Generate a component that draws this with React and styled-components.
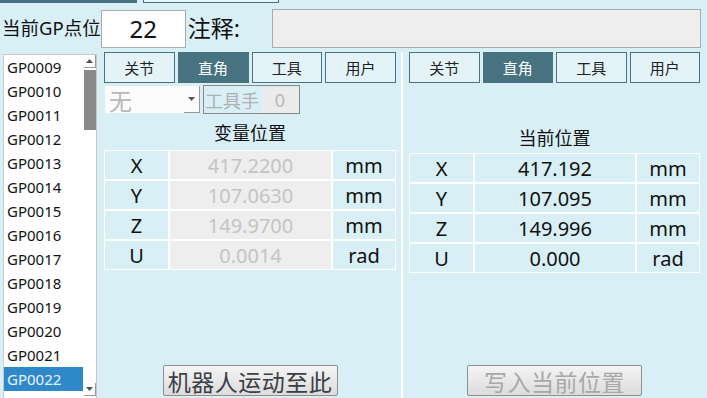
import React from "react";
import styled, { createGlobalStyle } from "styled-components";

const FONT = "'Noto Sans', 'Noto Sans CJK SC', sans-serif";
const BG = "#d9eff6";
const TEAL = "#46737f";

const Global = createGlobalStyle`
  html, body { margin: 0; padding: 0; background: ${BG}; overflow: hidden; }
  body { font-family: ${FONT}; color: #111; }
  * { box-sizing: border-box; }
`;

const Page = styled.div`
  width: 707px;
  height: 398px;
  display: flex;
  flex-direction: column;
  background: ${BG};
  overflow: hidden;
`;

const TopStrip = styled.div`
  height: 3px;
  display: flex;
  gap: 6px;
`;

const TopTab = styled.div`
  width: ${(p) => (p.$active ? "137px" : "136px")};
  height: 3px;
  background: ${(p) => (p.$active ? TEAL : "#e6f4f8")};
  border: ${(p) => (p.$active ? "none" : `1px solid ${TEAL}`)};
  border-top: none;
`;

const Header = styled.div`
  margin-top: 6px;
  height: 39px;
  display: flex;
  align-items: center;
  padding-left: 2px;
`;

const Label = styled.span`
  font-size: ${(p) => p.$size || 18}px;
  line-height: 1;
  white-space: nowrap;
`;

const PointInput = styled.div`
  width: 85px;
  height: 38px;
  background: #fff;
  border: 1px solid #aaa;
  display: flex;
  align-items: center;
  justify-content: center;
  font-size: 24px;
  margin-right: 2px;
`;

const Comment = styled.div`
  margin-left: auto;
  margin-right: 6px;
  width: 429px;
  height: 39px;
  background: #eeeeee;
  border: 1px solid #aaa;
`;

const Main = styled.div`
  margin-top: 4px;
  flex: 1;
  display: flex;
  padding-left: 3px;
`;

const List = styled.div`
  margin-top: 2px;
  width: 94px;
  height: 360px;
  background: #fff;
  border: 1px solid #c8c8c8;
  position: relative;
  margin-right: 7px;
`;

const Item = styled.div`
  height: 24px;
  width: 79px;
  padding-left: 3px;
  display: flex;
  align-items: center;
  font-size: 15px;
  color: ${(p) => (p.$sel ? "#e8f4ff" : "#111")};
  background: ${(p) => (p.$sel ? "#2f89c8" : "transparent")};
`;

const ScrollBar = styled.div`
  position: absolute;
  top: 0;
  right: 0;
  width: 13px;
  height: 344px;
`;

const Arrow = styled.div`
  position: absolute;
  right: 0;
  top: ${(p) => p.$top}px;
  width: 12px;
  height: 13px;
  border-right: 1px solid #999;
  border-bottom: 1px solid #999;
  display: flex;
  align-items: center;
  justify-content: center;
`;

const Thumb = styled.div`
  position: absolute;
  right: 0;
  top: 15px;
  width: 12px;
  height: 60px;
  background: #8a8a8a;
`;

const Panel = styled.div`
  width: ${(p) => p.$w}px;
  height: 346px;
  display: flex;
  flex-direction: column;
`;

const Tabs = styled.div`
  display: flex;
  gap: 3px;
  height: 31px;
`;

const Tab = styled.div`
  flex: 1;
  display: flex;
  align-items: center;
  justify-content: center;
  font-size: 15px;
  color: ${(p) => (p.$active ? "#fff" : "#222")};
  background: ${(p) => (p.$active ? TEAL : "#e4f3f8")};
  border: 1px solid ${TEAL};
`;

const Divider = styled.div`
  width: 2px;
  height: 346px;
  background: #fff;
  margin: 0 6px 0 5px;
`;

const ToolRow = styled.div`
  margin-top: 2px;
  height: 29px;
  display: flex;
  gap: 3px;
  align-items: center;
`;

const Combo = styled.div`
  width: 95px;
  height: 27px;
  margin-left: 1px;
  background: #fbfbfb;
  position: relative;
  font-size: 23px;
  color: #b8b8b8;
  display: flex;
  align-items: center;
  padding-left: 4px;
`;

const ComboArrow = styled.div`
  position: absolute;
  right: 0;
  top: 0;
  width: 16px;
  height: 27px;
  border-right: 1px solid #999;
  border-bottom: 1px solid #999;
  display: flex;
  align-items: center;
  justify-content: center;
`;

const ToolBox = styled.div`
  width: 97px;
  height: 29px;
  border: 1px solid #888;
  display: flex;
  align-items: center;
  padding-left: 1px;
  font-size: 18px;
  color: #b0b0b0;
`;

const ToolNum = styled.div`
  margin-left: auto;
  margin-right: 1px;
  width: 36px;
  height: 26px;
  background: #ececec;
  display: flex;
  align-items: center;
  justify-content: center;
  font-size: 18px;
  color: #b8b8b8;
`;

const Title = styled.div`
  margin-top: ${(p) => p.$mt}px;
  height: 24px;
  line-height: 24px;
  text-align: center;
  font-size: 18px;
  color: #111;
`;

const Table = styled.div`
  margin-top: ${(p) => p.$mt}px;
  display: grid;
  grid-template-columns: ${(p) => p.$cols};
  grid-auto-rows: 28px;
  gap: 2px;
  padding: 1px;
  background: #fff;
`;

const Cell = styled.div`
  display: flex;
  align-items: center;
  justify-content: center;
  font-size: 20px;
  background: ${(p) => (p.$grey ? "#eeeeee" : BG)};
  color: ${(p) => (p.$faded ? "#c4c4c4" : "#111")};
`;

const Button = styled.div`
  margin-top: auto;
  margin-bottom: ${(p) => p.$mb}px;
  align-self: center;
  width: 175px;
  height: 31px;
  border: 1px solid #8f8f8f;
  border-radius: 2px;
  background: linear-gradient(#f4f4f4, #dcdcdc);
  display: flex;
  align-items: center;
  justify-content: center;
  font-size: 23px;
  letter-spacing: 0.5px;
  color: ${(p) => (p.$disabled ? "#a8a8a8" : "#3a3f45")};
`;

const Tri = ({ up }) => (
  <svg width="7" height="4" viewBox="0 0 7 4">
    <path d={up ? "M0 4 L3.5 0 L7 4 Z" : "M0 0 L3.5 4 L7 0 Z"} fill="#555" />
  </svg>
);

const items = Array.from({ length: 14 }, (_, i) => "GP" + String(9 + i).padStart(4, "0"));
const tabNames = ["关节", "直角", "工具", "用户"];

const TabBar = () => (
  <Tabs>
    {tabNames.map((t) => (
      <Tab key={t} $active={t === "直角"}>{t}</Tab>
    ))}
  </Tabs>
);

const PosTable = ({ rows, cols, mt, faded }) => (
  <Table $cols={cols} $mt={mt}>
    {rows.map(([a, v, u]) => (
      <React.Fragment key={a}>
        <Cell>{a}</Cell>
        <Cell $grey={faded} $faded={faded}>{v}</Cell>
        <Cell>{u}</Cell>
      </React.Fragment>
    ))}
  </Table>
);

export default function App() {
  return (
    <Page>
      <Global />
      <TopStrip>
        <TopTab $active />
        <TopTab />
      </TopStrip>
      <Header>
        <Label $size={18.5}>当前GP点位</Label>
        <PointInput>22</PointInput>
        <Label $size={23}>注释:</Label>
        <Comment />
      </Header>
      <Main>
        <List>
          {items.map((it) => (
            <Item key={it} $sel={it === "GP0022"}>{it}</Item>
          ))}
          <ScrollBar>
            <Arrow $top={0}><Tri up /></Arrow>
            <Thumb />
            <Arrow $top={328}><Tri /></Arrow>
          </ScrollBar>
        </List>
        <Panel $w={292}>
          <TabBar />
          <ToolRow>
            <Combo>
              无
              <ComboArrow><Tri /></ComboArrow>
            </Combo>
            <ToolBox>
              工具手
              <ToolNum>0</ToolNum>
            </ToolBox>
          </ToolRow>
          <Title $mt={7}>变量位置</Title>
          <PosTable
            mt={5}
            faded
            cols="63px 161px 62px"
            rows={[
              ["X", "417.2200", "mm"],
              ["Y", "107.0630", "mm"],
              ["Z", "149.9700", "mm"],
              ["U", "0.0014", "rad"],
            ]}
          />
          <Button $mb={2}>机器人运动至此</Button>
        </Panel>
        <Divider />
        <Panel $w={291}>
          <TabBar />
          <Title $mt={43}>当前位置</Title>
          <PosTable
            mt={3}
            cols="63px 160px 62px"
            rows={[
              ["X", "417.192", "mm"],
              ["Y", "107.095", "mm"],
              ["Z", "149.996", "mm"],
              ["U", "0.000", "rad"],
            ]}
          />
          <Button $mb={2} $disabled>写入当前位置</Button>
        </Panel>
      </Main>
    </Page>
  );
}
